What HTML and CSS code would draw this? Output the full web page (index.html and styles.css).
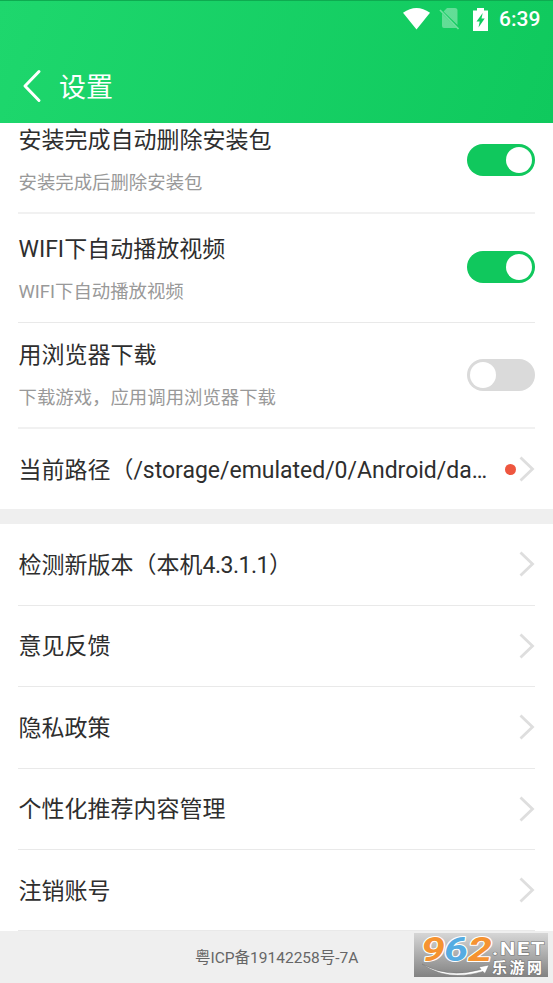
FILE: index.html
```html
<!DOCTYPE html>
<html lang="zh-CN">
<head>
<meta charset="utf-8">
<title>设置</title>
<link rel="stylesheet" href="styles.css">
</head>
<body>
<header class="header">
  <div class="status">
    <svg class="wifi" width="27" height="22" viewBox="0 0 27 22"><path d="M0 4.8Q13.500-4.800 27 4.800L13.500 21.500Z" fill="#fff"/></svg>
    <svg class="nosim" width="21" height="22" viewBox="0 0 21 22"><path d="M8 0H16Q18.500 0 18.500 2.500V17L4.500 3.500ZM3 5.500L17.500 20H5Q3 20 3 18Z" fill="#fff" opacity=".34"/><path d="M1 2L19.500 21" stroke="#fff" stroke-width="1.700" opacity=".4"/></svg>
    <svg class="battery" width="15" height="23" viewBox="0 0 15 23"><path fill-rule="evenodd" d="M4 0H11V2.500H15V23H0V2.500H4ZM9.700 5L3.500 13.500H6.700L5.500 19.500L11.700 10.500H8.500Z" fill="#fff"/></svg>
    <span class="clock">6:39</span>
  </div>
  <div class="titlebar">
    <svg width="20" height="34" viewBox="0 0 20 34"><path d="M17 2.500L3 17L17 31.500" fill="none" stroke="#fff" stroke-width="3" stroke-linecap="round" stroke-linejoin="round"/></svg>
    <h1>设置</h1>
  </div>
</header>
<main>
  <section class="group">
    <div class="option first"><div><h2>安装完成自动删除安装包</h2><p>安装完成后删除安装包</p></div><span class="switch on"></span></div>
    <div class="option second"><div><h2>WIFI下自动播放视频</h2><p>WIFI下自动播放视频</p></div><span class="switch on"></span></div>
    <div class="option third"><div><h2>用浏览器下载</h2><p>下载游戏，应用调用浏览器下载</p></div><span class="switch"></span></div>
    <div class="row path"><h2>当前路径（/storage/emulated/0/Android/da…</h2><i class="dot"></i><svg class="chevron" viewBox="0 0 16 26"><path d="M1.500 1.500L13.500 13L1.500 24.500"/></svg></div>
  </section>
  <section class="group links">
    <div class="row"><h2>检测新版本（本机<span class="version">4.3.1.1</span>）</h2><svg class="chevron" viewBox="0 0 16 26"><path d="M1.500 1.500L13.500 13L1.500 24.500"/></svg></div>
    <div class="row"><h2>意见反馈</h2><svg class="chevron" viewBox="0 0 16 26"><path d="M1.500 1.500L13.500 13L1.500 24.500"/></svg></div>
    <div class="row"><h2>隐私政策</h2><svg class="chevron" viewBox="0 0 16 26"><path d="M1.500 1.500L13.500 13L1.500 24.500"/></svg></div>
    <div class="row"><h2>个性化推荐内容管理</h2><svg class="chevron" viewBox="0 0 16 26"><path d="M1.500 1.500L13.500 13L1.500 24.500"/></svg></div>
    <div class="row"><h2>注销账号</h2><svg class="chevron" viewBox="0 0 16 26"><path d="M1.500 1.500L13.500 13L1.500 24.500"/></svg></div>
  </section>
</main>
<footer>
  <span>粤ICP备19142258号-7A</span>
  <svg class="watermark" width="134" height="44" viewBox="0 0 134 44">
    <defs><linearGradient id="metal" x1="0" y1="0" x2="0" y2="1"><stop offset="0" stop-color="#d6d6d6"/><stop offset="1" stop-color="#828282"/></linearGradient></defs>
    <rect width="134" height="44" fill="url(#metal)"/>
    <g class="digits" stroke="#fff" stroke-width="2" paint-order="stroke" stroke-linejoin="round">
      <text x="7" y="27.500" textLength="24" lengthAdjust="spacingAndGlyphs" fill="#f59331">9</text>
      <text x="30" y="27.500" textLength="24" lengthAdjust="spacingAndGlyphs" fill="#55ace2">6</text>
      <text x="54" y="27.500" textLength="24" lengthAdjust="spacingAndGlyphs" fill="#f59331">2</text>
    </g>
    <path d="M8 31Q34 46 67 36.500L65 34L75 32L71 40.500L69 38.500Q33 49 8 31Z" fill="#fff" stroke="#777" stroke-width=".5"/>
    <g fill="#fff" stroke="#777" stroke-width="1.200" paint-order="stroke">
      <text class="net" x="78" y="21.500" textLength="54" lengthAdjust="spacingAndGlyphs">.NET</text>
      <text class="site" x="78" y="39.500" textLength="50">乐游网</text>
    </g>
  </svg>
</footer>
</body>
</html>
```
FILE: styles.css
```css
* { box-sizing: border-box; }
body {
  margin: 0;
  width: 553px;
  height: 983px;
  overflow: hidden;
  background: #fff;
  color: #2e2e2e;
  font-family: Roboto, "Noto Sans CJK SC", sans-serif;
}
h1, h2, p { margin: 0; font-weight: 400; white-space: nowrap; }
.header {
  height: 123px;
  color: #fff;
  background: linear-gradient(110deg, #1ed76d, #0fc95d);
  border-top: 1px solid #0eab50;
}
.status {
  height: 36px;
  padding-right: 12px;
  display: flex;
  align-items: center;
  justify-content: flex-end;
}
.wifi { margin-right: 9px; }
.nosim { margin-right: 13px; }
.battery { margin-right: 11px; }
.clock { font-size: 21px; font-weight: 500; line-height: 24px; width: 42px; white-space: nowrap; }
.titlebar {
  height: 86px;
  padding: 12px 0 0 22px;
  display: flex;
  align-items: center;
  gap: 17px;
}
h1 { font-size: 27px; line-height: 40px; padding-top: 4px; }
h2 { font-size: 23px; line-height: 34px; }
p { font-size: 18.4px; line-height: 28px; color: #999; }
.group { padding: 0 18px; }
.option {
  display: flex;
  justify-content: space-between;
  border-bottom: 2px solid #f1f1f1;
}
.option div { padding-left: .5px; }
.first { height: 91px; padding-top: 1px; }
.first p { margin-top: 11px; }
.first .switch { margin-top: 20px; }
.second { height: 109px; padding-top: 19px; border-bottom-width: 1px; border-bottom-color: #e9e9e9; }
.second p { margin-top: 11px; }
.second .switch { margin-top: 18px; }
.third { height: 106px; padding-top: 16px; }
.third p { margin-top: 11px; }
.third .switch { margin-top: 20px; }
.switch {
  width: 68px;
  height: 32px;
  padding: 3px;
  border-radius: 16px;
  background: #dadada;
  display: flex;
}
.switch::before { content: ""; width: 26px; height: 26px; border-radius: 50%; background: #fff; }
.switch.on { background: #10c85d; justify-content: flex-end; }
.row {
  height: 81.5px;
  padding-left: .5px;
  display: flex;
  align-items: center;
  justify-content: space-between;
  border-bottom: 1px solid #e9e9e9;
}
.row h2 { padding-top: 3px; }
.version { letter-spacing: -.5px; }
.path { height: 80px; border: 0; }
.path h2 { width: 469px; letter-spacing: -.02px; }
.dot { width: 11px; height: 11px; flex: none; border-radius: 50%; background: #ee563f; margin: 0 3px 0 17px; }
.chevron { width: 16px; height: 26px; flex: none; fill: none; stroke: #dedede; stroke-width: 2.8px; }
.links { border-top: 15px solid #efefef; }
.links .row:last-child { height: 81px; }
footer {
  height: 52px;
  padding: 2px 5.5px 0 195px;
  display: flex;
  justify-content: space-between;
  background: #efefef;
}
footer span { font-size: 15.5px; line-height: 24px; margin-top: 13px; color: #666; white-space: nowrap; }
.watermark { overflow: visible; font-family: Roboto, "Noto Sans CJK SC", sans-serif; font-weight: 700; }
.digits { font-size: 33px; font-style: italic; }
.net { font-size: 19px; letter-spacing: 1.5px; }
.site { font-size: 15px; }
```
